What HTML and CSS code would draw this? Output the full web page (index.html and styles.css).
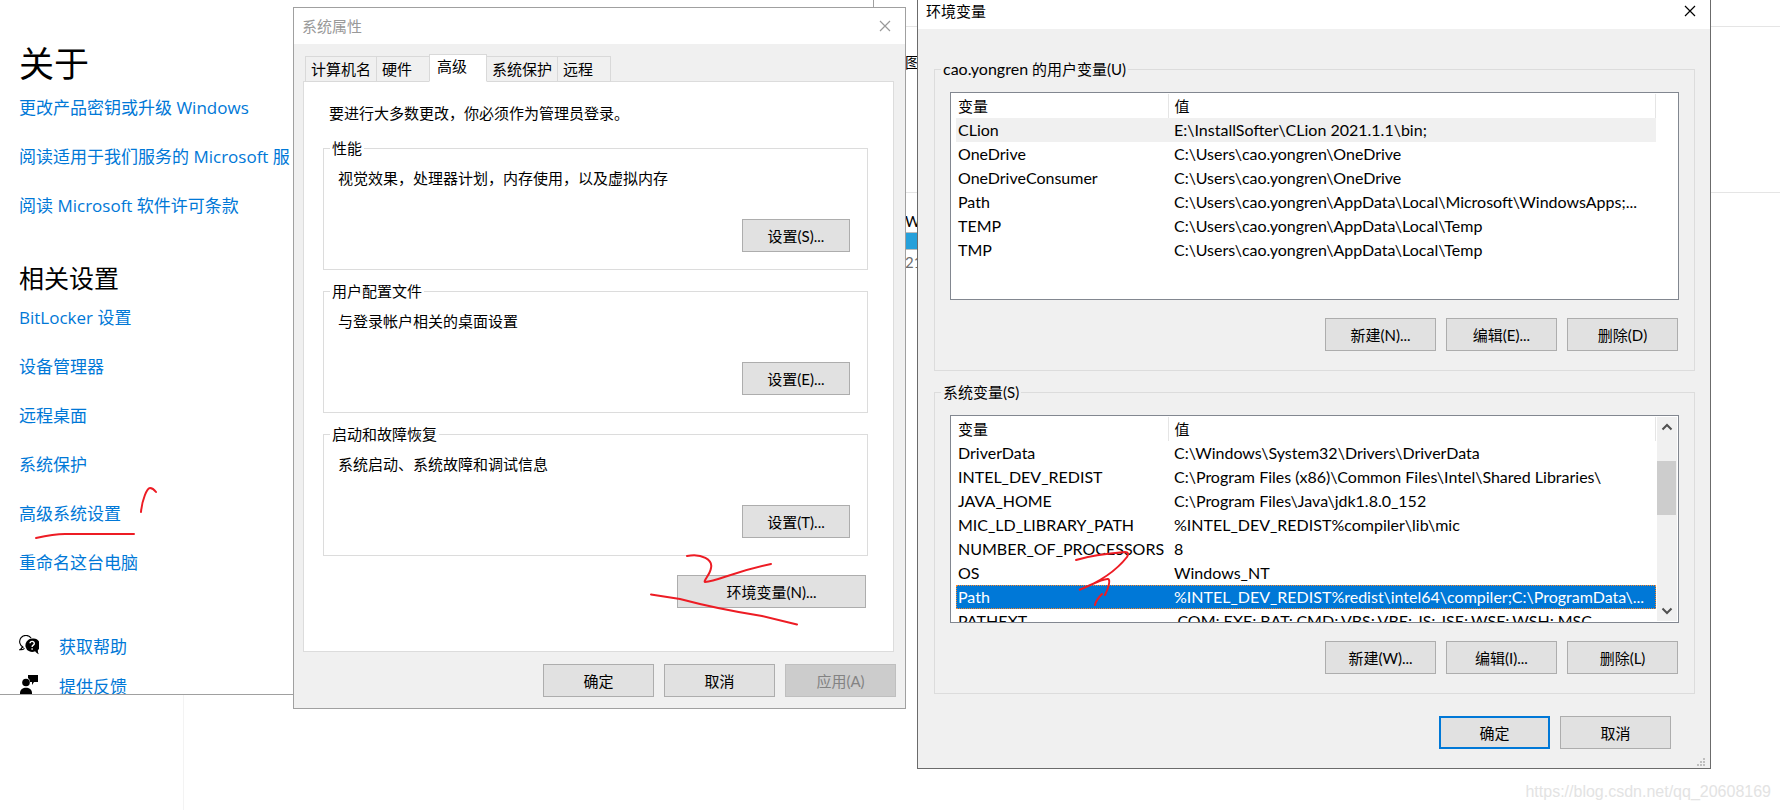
FILE: index.html
```html
<!DOCTYPE html>
<html lang="zh-CN">
<head>
<meta charset="utf-8">
<title>环境变量</title>
<link rel="stylesheet" href="styles.css">
</head>
<body>
<div class="desktop">
  <div class="explorer">
    <div class="explorer-bar"></div>
    <div class="explorer-view">图</div>
    <div class="explorer-list">
      <div class="explorer-name">W</div>
      <div class="explorer-usage"></div>
      <div class="explorer-free">21</div>
    </div>
  </div>
  <div class="divider"></div>

  <main class="settings">
    <h1>关于</h1>
    <nav class="links">
      <a href="#">更改产品密钥或升级 Windows</a>
      <a href="#">阅读适用于我们服务的 Microsoft 服</a>
      <a href="#">阅读 Microsoft 软件许可条款</a>
    </nav>
    <h2>相关设置</h2>
    <nav class="links">
      <a href="#">BitLocker 设置</a>
      <a href="#">设备管理器</a>
      <a href="#">远程桌面</a>
      <a href="#">系统保护</a>
      <a href="#">高级系统设置</a>
      <a href="#">重命名这台电脑</a>
    </nav>
    <div class="support">
      <a href="#"><svg width="20" height="20" viewBox="0 0 20 20"><path d="M4.500 12.500 A6.300 6.300 0 1 1 12.200 3.200 M3.200 11 C3.300 13 2.500 14 .9 14.700 C3 15 4.600 14.300 5.500 13.400" fill="none" stroke="#000" stroke-width="1.100"/><path d="M13 3.600a6.700 6.700 0 1 0 3.100 12.700c1 1.500 2.300 2.400 3.800 3 -.9-1.500-1.200-2.800-1-4.200A6.700 6.700 0 0 0 13 3.600z"/><path d="M11 8.300c.2-2.600 4.400-2.500 4.300.1 0 1.800-2.200 1.700-2.200 3.500M13.100 13.200v1.500" fill="none" stroke="#fff" stroke-width="1.400"/></svg>获取帮助</a>
      <a href="#"><svg width="20" height="20" viewBox="0 0 20 20"><path d="M9 0h10v7h-4l-2 3V7h-2A4.800 4.800 0 0 0 9 3z"/><circle cx="7" cy="7.500" r="3.800"/><path d="M1 20v-2c0-7 12-7 12 0v2z"/></svg>提供反馈</a>
    </div>
  </main>

  <section class="window system" aria-label="系统属性">
    <header class="titlebar inactive"><span>系统属性</span><button class="close" aria-label="关闭"><svg width="12" height="12" viewBox="0 0 12 12"><path d="M1 1l10 10M11 1L1 11"/></svg></button></header>
    <div class="tabs" role="tablist">
      <button role="tab" class="tab">计算机名</button>
      <button role="tab" class="tab">硬件</button>
      <button role="tab" class="tab selected" aria-selected="true">高级</button>
      <button role="tab" class="tab">系统保护</button>
      <button role="tab" class="tab">远程</button>
    </div>
    <div class="panel" role="tabpanel">
      <p class="notice">要进行大多数更改，你必须作为管理员登录。</p>
      <fieldset class="option"><legend>性能</legend><p>视觉效果，处理器计划，内存使用，以及虚拟内存</p><button class="button">设置(S)...</button></fieldset>
      <fieldset class="option"><legend>用户配置文件</legend><p>与登录帐户相关的桌面设置</p><button class="button">设置(E)...</button></fieldset>
      <fieldset class="option"><legend>启动和故障恢复</legend><p>系统启动、系统故障和调试信息</p><button class="button">设置(T)...</button></fieldset>
      <button class="button wide">环境变量(N)...</button>
    </div>
    <footer class="actions">
      <button class="button">确定</button>
      <button class="button">取消</button>
      <button class="button" disabled>应用(A)</button>
    </footer>
  </section>

  <section class="window environment" aria-label="环境变量">
    <header class="titlebar"><span>环境变量</span><button class="close" aria-label="关闭"><svg width="12" height="12" viewBox="0 0 12 12"><path d="M1 1l10 10M11 1L1 11"/></svg></button></header>
    <div class="groups">
      <fieldset class="variables">
        <legend><span class="latin">cao.yongren</span> 的用户变量(U)</legend>
        <div class="list">
          <table>
            <thead><tr><th class="name">变量</th><th>值</th></tr></thead>
            <tbody>
              <tr class="current"><td>CLion</td><td>E:\InstallSofter\CLion 2021.1.1\bin;</td></tr>
              <tr><td>OneDrive</td><td>C:\Users\cao.yongren\OneDrive</td></tr>
              <tr><td>OneDriveConsumer</td><td>C:\Users\cao.yongren\OneDrive</td></tr>
              <tr><td>Path</td><td>C:\Users\cao.yongren\AppData\Local\Microsoft\WindowsApps;...</td></tr>
              <tr><td>TEMP</td><td>C:\Users\cao.yongren\AppData\Local\Temp</td></tr>
              <tr><td>TMP</td><td>C:\Users\cao.yongren\AppData\Local\Temp</td></tr>
            </tbody>
          </table>
        </div>
        <div class="commands"><button class="button">新建(N)...</button><button class="button">编辑(E)...</button><button class="button">删除(D)</button></div>
      </fieldset>
      <fieldset class="variables">
        <legend>系统变量(S)</legend>
        <div class="list">
          <table>
            <thead><tr><th class="name">变量</th><th>值</th></tr></thead>
            <tbody>
              <tr><td>DriverData</td><td>C:\Windows\System32\Drivers\DriverData</td></tr>
              <tr><td>INTEL_DEV_REDIST</td><td>C:\Program Files (x86)\Common Files\Intel\Shared Libraries\</td></tr>
              <tr><td>JAVA_HOME</td><td>C:\Program Files\Java\jdk1.8.0_152</td></tr>
              <tr><td>MIC_LD_LIBRARY_PATH</td><td>%INTEL_DEV_REDIST%compiler\lib\mic</td></tr>
              <tr><td>NUMBER_OF_PROCESSORS</td><td>8</td></tr>
              <tr><td>OS</td><td>Windows_NT</td></tr>
              <tr class="chosen"><td>Path</td><td>%INTEL_DEV_REDIST%redist\intel64\compiler;C:\ProgramData\...</td></tr>
              <tr><td>PATHEXT</td><td>.COM;.EXE;.BAT;.CMD;.VBS;.VBE;.JS;.JSE;.WSF;.WSH;.MSC</td></tr>
            </tbody>
          </table>
          <div class="scrollbar">
            <svg width="12" height="8" viewBox="0 0 12 8"><path d="M1.500 6.500L6 2l4.500 4.500"/></svg>
            <div class="track"><div class="thumb"></div></div>
            <svg width="12" height="8" viewBox="0 0 12 8"><path d="M1.500 1.500L6 6l4.500-4.500"/></svg>
          </div>
        </div>
        <div class="commands"><button class="button">新建(W)...</button><button class="button">编辑(I)...</button><button class="button">删除(L)</button></div>
      </fieldset>
    </div>
    <footer class="confirm">
      <button class="button default">确定</button>
      <button class="button">取消</button>
    </footer>
    <svg class="grip" width="8" height="8" viewBox="0 0 8 8"><path d="M6 0h2v2H6zM3 3h2v2H3zM6 3h2v2H6zM0 6h2v2H0zM3 6h2v2H3zM6 6h2v2H6z"/></svg>
  </section>

  <svg class="ink" width="1780" height="810" viewBox="0 0 1780 810">
    <path d="M36 538 Q54 534 65 534 H134"/>
    <path d="M141 512 C142 500 147 488 150 488 Q153 488 156 492"/>
    <path d="M687 556 C702 553 713 560 711 568 C710 575 703 581 705 582 C718 581 732 572 771 564"/>
    <path d="M651 594.500 L680 599 C710 607 730 611 762 616 L797 624.500"/>
    <path d="M1076 560 C1092 555 1112 553 1125 552 Q1130 552 1127 557 C1116 571 1102 581 1079 590 C1091 585 1104 578 1108 579 C1111 580 1108 589 1105 595"/>
    <path d="M1102 594 Q1096 600 1095 605"/>
  </svg>
  <div class="watermark">https://blog.csdn.net/qq_20608169</div>
</div>
</body>
</html>
```
FILE: styles.css
```css
* { box-sizing: border-box; }

body {
  margin: 0;
  background: #fff;
  color: #000;
  font-family: Lato, "Noto Sans CJK SC", sans-serif;
  font-size: 15px;
  line-height: 20px;
}

p { margin: 0; }

button { font: inherit; color: inherit; }

.desktop {
  position: relative;
  min-height: 100vh;
  overflow: hidden;
}

/* Settings page */
.settings {
  position: absolute;
  left: 0;
  top: 0;
  width: 874px;
  height: 695px;
  padding: 40px 19px 0;
  overflow: hidden;
  background: #fff;
  border: solid #a0a0a0;
  border-width: 0 1px 1px 0;
  font-family: "Open Sans", "Noto Sans CJK SC", sans-serif;
  font-size: 17px;
}

.settings h1 {
  margin: 0 0 8px;
  font-size: 35px;
  font-weight: 400;
  line-height: 48px;
}

.settings h2 {
  margin: 44px 0 12px;
  font-size: 25px;
  font-weight: 400;
  line-height: 32px;
}

.settings a {
  color: #0078d7;
  text-decoration: none;
  line-height: 24px;
}

.links {
  display: grid;
  gap: 25px;
  justify-items: start;
}

.support {
  display: grid;
  gap: 16px;
  margin-top: 60px;
}

.support a {
  display: flex;
  gap: 20px;
}

.support svg { fill: #000; }

/* Window behind the dialogs */
.explorer {
  position: absolute;
  left: 905px;
  right: 0;
  top: 0;
}

.explorer-bar {
  height: 27px;
  border-bottom: 1px solid #e5e5e5;
}

.explorer-view {
  height: 166px;
  padding-top: 25px;
  border-bottom: 1px solid #e5e5e5;
}

.explorer-name { padding-top: 18px; line-height: 20px; }

.explorer-usage {
  height: 18px;
  margin-top: 1px;
  background: #26a0da;
  border: solid #bcbcbc;
  border-width: 1px 0;
  width: 100px;
}

.explorer-free { padding-top: 2px; color: #6d6d6d; }

.divider {
  position: absolute;
  left: 183px;
  top: 695px;
  bottom: 0;
  width: 1px;
  background: #f3f3f3;
}

/* Dialogs */
.window {
  position: absolute;
  background: #f0f0f0;
  border: 1px solid #a0a0a0;
}

.system { left: 293px; top: 7px; width: 613px; }

.environment {
  left: 917px;
  top: -8px;
  width: 794px;
  border-color: #6b6b6b;
}

.titlebar {
  display: flex;
  align-items: center;
  justify-content: space-between;
  height: 36px;
  padding: 0 14px 1px 8px;
  background: #fff;
}

.inactive { color: #999; }

.close {
  display: flex;
  padding: 0;
  border: 0;
  background: none;
}

.close svg {
  fill: none;
  stroke: currentColor;
  stroke-width: 1.2;
}

.tabs {
  display: flex;
  align-items: flex-end;
  padding: 10px 11px 0;
}

.tab {
  height: 26px;
  min-width: 54px;
  margin: 0 -1px -1px 0;
  padding: 0 5px;
  background: #f0f0f0;
  border: 1px solid #d9d9d9;
  text-align: left;
}

.tab.selected {
  height: 28px;
  min-width: 58px;
  padding: 0 7px 4px;
  background: #fff;
  border-bottom-color: #fff;
  z-index: 1;
}

.panel {
  display: grid;
  gap: 11px;
  margin: 0 11px 0 9px;
  padding: 21px 25px 43px 19px;
  background: #fff;
  border: 1px solid #dcdcdc;
}

.notice { padding: 0 0 4px 6px; }

fieldset {
  min-width: 0;
  margin: 0;
  border: 1px solid #dcdcdc;
}

legend { padding: 0 2px; line-height: 20px; }

.option {
  display: block;
  padding: 10px 17px 17px 6px;
}

.option p { padding-left: 8px; }

.option .button {
  display: block;
  width: 108px;
  margin: 31px 0 0 auto;
}

.button {
  width: 111px;
  height: 33px;
  padding: 0;
  background: #e1e1e1;
  border: 1px solid #adadad;
}

.button:disabled {
  background: #ccc;
  border-color: #bfbfbf;
  color: #838383;
}

.button.default { border: 2px solid #0078d7; }

.button.wide {
  width: 189px;
  margin: 8px 2px 0 0;
  justify-self: end;
}

.actions {
  display: flex;
  justify-content: flex-end;
  gap: 10px;
  padding: 12px 9px 11px;
}

.groups {
  display: grid;
  gap: 11px;
  padding: 30px 15px 0 16px;
}

.variables { padding: 13px 15px 19px; }

.variables legend { margin-left: -9px; }

.latin { font-size: 16px; }

.list {
  display: flex;
  height: 208px;
  padding: 1px;
  overflow: hidden;
  background: #fff;
  border: 1px solid #828790;
}

table {
  width: 700px;
  height: max-content;
  margin-left: 4px;
  border-collapse: collapse;
  table-layout: fixed;
}

th, td {
  height: 24px;
  padding: 0 0 0 6px;
  font-weight: 400;
  line-height: 24px;
  text-align: left;
  white-space: nowrap;
}

th { border-right: 1px solid #e5e5e5; }

td { font-size: 16px; }

th:first-child, td:first-child { padding-left: 2px; }

.name { width: 212px; }

.current { background: #f0f0f0; }

.chosen {
  background: #0078d7;
  color: #fff;
  outline: 1px dotted #ff8728;
  outline-offset: -1px;
}

.scrollbar {
  display: flex;
  flex: 1;
  flex-direction: column;
  align-items: center;
  justify-content: space-between;
  margin-left: 1px;
  padding: 6px 0;
  background: #f0f0f0;
}

.scrollbar svg {
  fill: none;
  stroke: #505050;
  stroke-width: 2;
}

.track {
  flex: 1;
  align-self: stretch;
  padding: 30px 1px 0 0;
}

.thumb { height: 54px; background: #cdcdcd; }

.commands {
  display: flex;
  justify-content: flex-end;
  gap: 10px;
  padding: 18px 1px 0 0;
}

.confirm {
  display: flex;
  justify-content: flex-end;
  gap: 10px;
  padding: 22px 39px 19px;
}

.grip {
  position: absolute;
  right: 5px;
  bottom: 2px;
  fill: #bfbfbf;
}

/* Red pen marks over the dialogs */
.ink {
  position: absolute;
  left: 0;
  top: 0;
  fill: none;
  stroke: #ed1c24;
  stroke-width: 2;
  stroke-linecap: round;
  pointer-events: none;
}

.watermark {
  position: absolute;
  right: 9px;
  bottom: 8px;
  color: #e3e3e3;
  font-family: "Liberation Sans", sans-serif;
  font-size: 16px;
}
```
